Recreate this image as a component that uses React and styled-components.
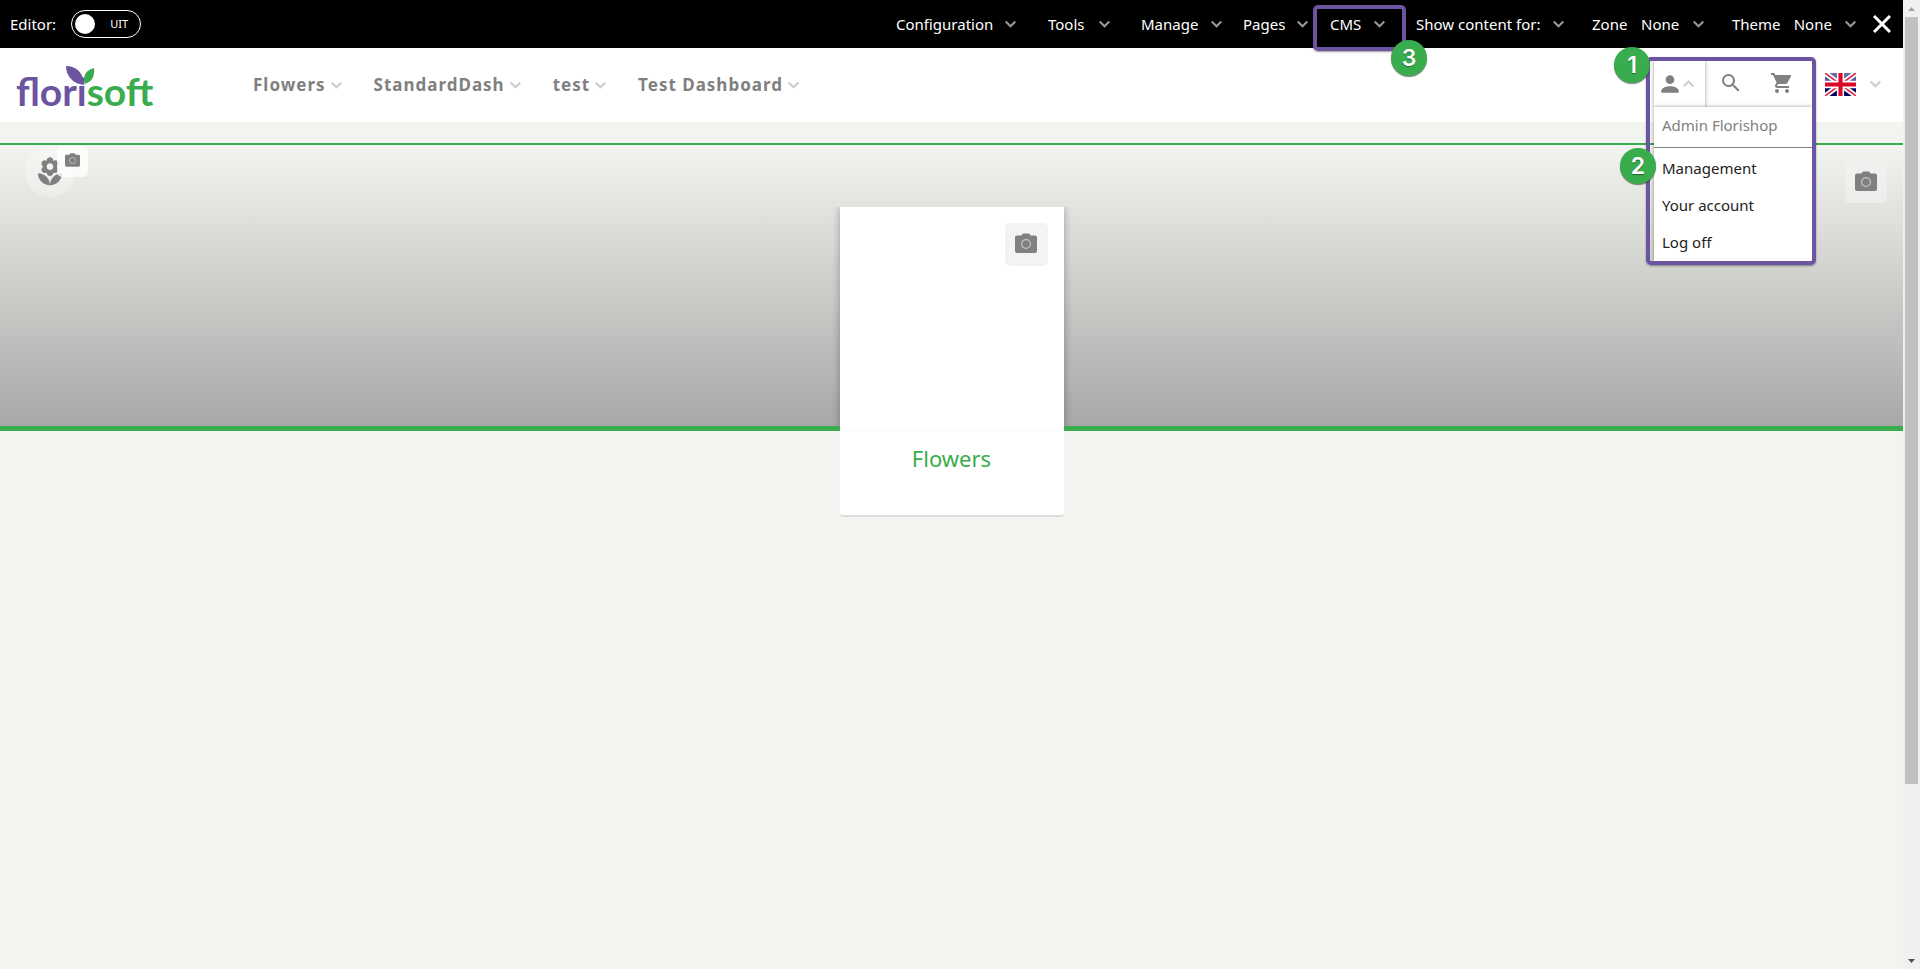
import React from "react";
import styled, { createGlobalStyle, css } from "styled-components";
import { MdPerson, MdSearch, MdShoppingCart } from "react-icons/md";

const GREEN = "#39ac4d";
const PURPLE = "#6c54a0";
const GRAY = "#808080";

const GlobalStyle = createGlobalStyle`
  * { box-sizing: border-box; }
  body {
    margin: 0;
    background: #f2f4ef;
    font-family: "Noto Sans", "Open Sans", sans-serif;
    font-size: 15px;
    line-height: 20px;
  }
  button { font: inherit; border: 0; padding: 0; background: none; cursor: pointer; }
  svg { display: block; flex: none; }
`;

const Page = styled.div`
  display: grid;
  grid-template-columns: minmax(0, 1fr) 17px;
  min-height: 100vh;
`;

const Toolbar = styled.div`
  display: flex;
  align-items: center;
  justify-content: space-between;
  height: 48px;
  padding: 0 12px 0 10px;
  background: #000;
  color: #fff;
`;

const EditorControl = styled.label`
  display: flex;
  align-items: center;
  gap: 15px;
`;

const SwitchTrack = styled.span`
  position: relative;
  display: flex;
  align-items: center;
  justify-content: space-between;
  width: 70px;
  height: 28px;
  padding: 0 12px 0 3px;
  border: 1px solid #fff;
  border-radius: 14px;
  font-size: 11px;
`;

const SwitchInput = styled.input`
  position: absolute;
  inset: 0;
  width: 100%;
  height: 100%;
  margin: 0;
  opacity: 0;
`;

const Knob = styled.span`
  width: 20px;
  height: 20px;
  border-radius: 50%;
  background: #fff;
`;

const ToolbarMenus = styled.nav`
  display: flex;
  align-items: center;
`;

const ToolbarItem = styled.button`
  position: relative;
  display: flex;
  align-items: center;
  justify-content: space-between;
  width: ${(p) => p.$width}px;
  height: 48px;
  margin-right: ${(p) => p.$after}px;
  color: #fff;
  white-space: nowrap;
`;

const Frame = styled.span`
  position: absolute;
  border: 4px solid ${PURPLE};
  border-radius: 5px;
  box-shadow: 0 1px 2px rgba(0, 0, 0, 0.4);
  pointer-events: none;
  z-index: 3;
`;

const CmsFrame = styled(Frame)`
  inset: 5px -21px -3px -17px;
`;

const AccountFrame = styled(Frame)`
  inset: -4px -4px -158px -8px;
`;

const Badge = styled.span`
  position: absolute;
  top: ${(p) => p.$top}px;
  left: ${(p) => p.$left}px;
  display: flex;
  align-items: center;
  justify-content: center;
  width: 36px;
  height: 36px;
  border-radius: 50%;
  background: ${GREEN};
  box-shadow: 0 1px 1px rgba(0, 0, 0, 0.5);
  color: #fff;
  font: 600 23px/36px Inter, sans-serif;
  text-shadow: 0 1px 1px rgba(0, 0, 0, 0.4);
  z-index: 4;
`;

const CloseButton = styled.button`
  color: #fff;
`;

const Header = styled.header`
  display: flex;
  align-items: center;
  height: 74px;
  padding: 0 22px 2px 16px;
  background: #fff;
`;

const LogoLink = styled.a`
  display: block;
  width: 237px;
`;

const MainNav = styled.nav`
  display: flex;
  flex: 1;
  gap: 32px;
  padding-top: 2px;
`;

const NavItem = styled.button`
  display: flex;
  align-items: center;
  gap: 5px;
  color: ${GRAY};
  font-size: 17px;
  font-weight: 700;
  letter-spacing: 1px;
  line-height: 24px;
  white-space: nowrap;
`;

const AccountArea = styled.div`
  position: relative;
  display: flex;
  width: 158px;
  height: 46px;
  margin-right: 13px;
  color: ${GRAY};
`;

const iconButton = css`
  display: flex;
  align-items: center;
  height: 46px;
  color: ${GRAY};
`;

const AccountTrigger = styled.button`
  ${iconButton}
  width: 51px;
  padding: 0 3px;
  background: #fff;
  box-shadow: 0 0 4px rgba(0, 0, 0, 0.4);
`;

const IconButton = styled.button`
  ${iconButton}
  justify-content: center;
  width: 51px;
  padding-bottom: 2px;
`;

const AccountMenu = styled.div`
  position: absolute;
  top: 46px;
  left: 0;
  width: 158px;
  height: 154px;
  background: #fff;
  box-shadow: 0 0 4px rgba(0, 0, 0, 0.4);
  z-index: 2;
`;

const AccountName = styled.div`
  height: 41px;
  padding: 8px;
  border-bottom: 1px solid ${GRAY};
  color: ${GRAY};
`;

const AccountLink = styled.a`
  display: block;
  padding: 10px 8px 7px;
  color: #222;
  text-decoration: none;
`;

const Language = styled.button`
  display: flex;
  align-items: center;
  gap: 14px;
`;

const Hero = styled.section`
  position: relative;
  display: flex;
  align-items: flex-start;
  justify-content: center;
  height: 288px;
  margin-top: 21px;
  padding-top: 62px;
  border-top: 2px solid ${GREEN};
  border-bottom: 5px solid ${GREEN};
  background: linear-gradient(#f2f4ef, #a8a9a7);
`;

const Tile = styled.button`
  display: flex;
  align-items: center;
  justify-content: center;
  width: ${(p) => p.$size}px;
  height: ${(p) => p.$size}px;
  padding-bottom: 3px;
  border-radius: 5px;
  background: ${(p) => p.$tone};
`;

const FloristButton = styled.button`
  position: absolute;
  top: 2px;
  left: 25px;
  display: flex;
  align-items: center;
  justify-content: center;
  width: 50px;
  height: 50px;
  border-radius: 50%;
  background: rgba(255, 255, 255, 0.3);
  color: ${GRAY};
`;

const LeftTile = styled(Tile)`
  position: absolute;
  top: 1px;
  left: 57px;
`;

const RightTile = styled(Tile)`
  position: absolute;
  top: 16px;
  right: 16px;
`;

const Card = styled.article`
  width: 224px;
  background: #fff;
  border-bottom: 2px solid #dadddc;
  border-radius: 0 0 4px 4px;
`;

const CardMedia = styled.div`
  display: flex;
  justify-content: flex-end;
  align-items: flex-start;
  height: 224px;
  padding: 16px;
  background: #fff;
  box-shadow: 0 0 8px rgba(0, 0, 0, 0.3);
  clip-path: inset(0 -10px 5px -10px);
`;

const CardTitle = styled.h2`
  height: 84px;
  margin: 0;
  padding-top: 11px;
  border-top: 1px solid #fafafa;
  color: ${GREEN};
  font-size: 22px;
  font-weight: 400;
  line-height: 30px;
  text-align: center;
`;

const Scrollbar = styled.div`
  display: flex;
  flex-direction: column;
  align-items: center;
  background: #f0f0f0;
`;

const Arrow = styled.div`
  display: flex;
  align-items: center;
  justify-content: center;
  height: 17px;
`;

const Thumb = styled.div`
  width: 13px;
  flex: 767 0 0;
  background: #c1c1c1;
`;

const TrackRest = styled.div`
  flex: 168 0 0;
`;

const Chevron = ({ up, color = "#ccc" }) => (
  <svg width="11" height="8" viewBox="0 0 11 8" fill="none" stroke={color} strokeWidth="2" aria-hidden="true">
    <path d={up ? "M.7 6.3 5.5 1.5l4.8 4.8" : "M.7 1.5l4.8 4.8 4.8-4.8"} />
  </svg>
);

const Camera = ({ width = 22 }) => (
  <svg width={width} viewBox="0 0 22 20" aria-hidden="true">
    <path d="M2 2.500h4.300L8 .500h6l1.700 2H20a2 2 0 0 1 2 2V18a2 2 0 0 1-2 2H2a2 2 0 0 1-2-2V4.500a2 2 0 0 1 2-2z" fill={GRAY} />
    <circle cx="11" cy="11" r="4.400" fill="none" stroke="#c4c4c4" strokeWidth="1.200" />
  </svg>
);

const Florist = () => (
  <svg width="32" height="32" viewBox="0 0 24 24" fill="currentColor" aria-hidden="true">
    <path d="M3 13c0 4.970 4.030 9 9 9 0-4.970-4.030-9-9-9zM12 5.500c1.380 0 2.500 1.120 2.500 2.500s-1.120 2.500-2.500 2.500S9.500 9.380 9.500 8s1.120-2.500 2.500-2.500zm-6.400 4.750c0 1.380 1.120 2.500 2.500 2.500.53 0 1.010-.16 1.420-.44l-.02.19c0 1.380 1.120 2.500 2.500 2.500s2.500-1.120 2.500-2.500l-.02-.19c.4.280.89.440 1.420.440 1.380 0 2.500-1.120 2.500-2.500 0-1-.59-1.850-1.430-2.250.84-.4 1.430-1.250 1.430-2.250 0-1.380-1.120-2.500-2.500-2.500-.53 0-1.010.16-1.420.44l.02-.19C14.500 2.120 13.380 1 12 1S9.500 2.120 9.500 3.500l.02.19c-.4-.28-.89-.44-1.420-.44-1.380 0-2.500 1.120-2.500 2.500 0 1 .59 1.850 1.430 2.250-.84.4-1.430 1.250-1.430 2.250zM12 22c4.970 0 9-4.030 9-9-4.970 0-9 4.030-9 9z" />
  </svg>
);

const Logo = () => (
  <svg width="150" height="66" viewBox="0 0 150 66" role="img" aria-label="florisoft">
    <text x="0" y="55" fontFamily="Lato, sans-serif" fontSize="39" fontWeight="700" fill={PURPLE}>
      flori<tspan fill={GREEN}>soft</tspan>
    </text>
    <path d="M50 15c10 0 18 7 18 19C58 33 50 26 50 15z" fill={PURPLE} />
    <path d="M78 17c-8 2-11.500 8-9.500 16C76 31 79 25 78 17z" fill={GREEN} />
  </svg>
);

const Flag = () => (
  <svg width="31" height="23" viewBox="0 0 60 44" preserveAspectRatio="none" aria-hidden="true">
    <defs>
      <linearGradient id="flagBlue" x2="0" y2="1">
        <stop stopColor="#6a6aae" />
        <stop offset="0.5" stopColor="#4a4a96" />
        <stop offset="0.55" stopColor="#000060" />
        <stop offset="1" stopColor="#00005c" />
      </linearGradient>
    </defs>
    <path fill="url(#flagBlue)" d="M0 0h60v44H0z" />
    <path d="M0 0l60 44M60 0L0 44" stroke="#fff" strokeWidth="10" />
    <path d="M0 0l60 44M60 0L0 44" stroke="#d8213b" strokeWidth="3" />
    <path d="M30 0v44M0 22h60" stroke="#fff" strokeWidth="14" />
    <path d="M30 0v44M0 22h60" stroke="#d80a27" strokeWidth="8" />
  </svg>
);

const toolbarItems = [
  { labels: ["Configuration"], width: 120, after: 32 },
  { labels: ["Tools"], width: 62, after: 31 },
  { labels: ["Manage"], width: 81, after: 21 },
  { labels: ["Pages"], width: 65, after: 22 },
  { labels: ["CMS"], width: 55, after: 31, framed: true },
  { labels: ["Show content for:"], width: 148, after: 28 },
  { labels: ["Zone", "None"], width: 112, after: 28 },
  { labels: ["Theme", "None"], width: 124, after: 17 },
];

export default function App() {
  return (
    <>
      <GlobalStyle />
      <Page>
        <div>
          <Toolbar>
            <EditorControl>
              Editor:
              <SwitchTrack>
                <SwitchInput type="checkbox" />
                <Knob />
                UIT
              </SwitchTrack>
            </EditorControl>
            <ToolbarMenus>
              {toolbarItems.map((item) => (
                <ToolbarItem key={item.labels[0]} $width={item.width} $after={item.after}>
                  {item.labels.map((label) => (
                    <span key={label}>{label}</span>
                  ))}
                  <Chevron color="#999" />
                  {item.framed && (
                    <>
                      <CmsFrame />
                      <Badge $top={40} $left={61}>3</Badge>
                    </>
                  )}
                </ToolbarItem>
              ))}
              <CloseButton aria-label="Close">
                <svg width="18" height="18" viewBox="0 0 18 18" stroke="currentColor" strokeWidth="3">
                  <path d="M1 1l16 16M17 1L1 17" />
                </svg>
              </CloseButton>
            </ToolbarMenus>
          </Toolbar>

          <Header>
            <LogoLink href="#" aria-label="florisoft"><Logo /></LogoLink>
            <MainNav>
              {["Flowers", "StandardDash", "test", "Test Dashboard"].map((label) => (
                <NavItem key={label}>
                  {label}
                  <Chevron />
                </NavItem>
              ))}
            </MainNav>
            <AccountArea>
              <AccountTrigger aria-label="Account">
                <MdPerson size={26} />
                <Chevron up />
              </AccountTrigger>
              <IconButton aria-label="Search"><MdSearch size={24} /></IconButton>
              <IconButton aria-label="Cart"><MdShoppingCart size={24} /></IconButton>
              <AccountMenu>
                <AccountName>Admin Florishop</AccountName>
                <AccountLink href="#">Management</AccountLink>
                <AccountLink href="#">Your account</AccountLink>
                <AccountLink href="#">Log off</AccountLink>
              </AccountMenu>
              <AccountFrame />
              <Badge $top={-14} $left={-40}>1</Badge>
              <Badge $top={87} $left={-34}>2</Badge>
            </AccountArea>
            <Language aria-label="Language">
              <Flag />
              <Chevron />
            </Language>
          </Header>

          <Hero>
            <FloristButton aria-label="Flowers icon"><Florist /></FloristButton>
            <LeftTile $size={31} $tone="rgba(255, 255, 255, 0.75)" aria-label="Change icon">
              <Camera width={15} />
            </LeftTile>
            <Card>
              <CardMedia>
                <Tile $size={43} $tone="#f3f3f3" aria-label="Change card picture"><Camera /></Tile>
              </CardMedia>
              <CardTitle>Flowers</CardTitle>
            </Card>
            <RightTile $size={42} $tone="rgba(243, 243, 243, 0.6)" aria-label="Change banner picture">
              <Camera />
            </RightTile>
          </Hero>
        </div>

        <Scrollbar aria-hidden="true">
          <Arrow>
            <svg width="7" height="4" viewBox="0 0 7 4"><path d="M0 4 3.500 0 7 4z" fill="#a3a3a3" /></svg>
          </Arrow>
          <Thumb />
          <TrackRest />
          <Arrow>
            <svg width="7" height="4" viewBox="0 0 7 4"><path d="M0 0h7L3.500 4z" fill="#505050" /></svg>
          </Arrow>
        </Scrollbar>
      </Page>
    </>
  );
}
